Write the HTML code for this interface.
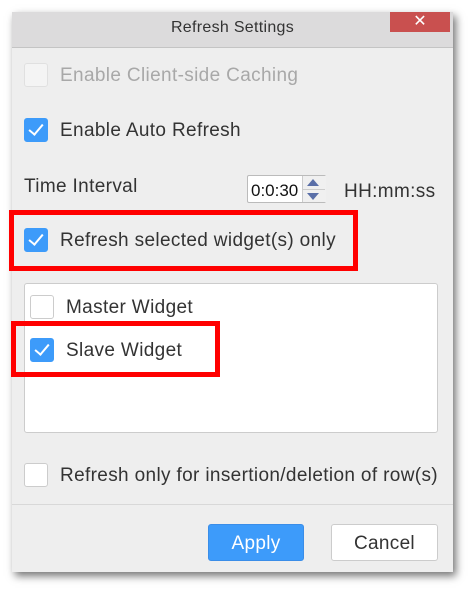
<!DOCTYPE html><html><head><style>
body{margin:0;width:473px;height:592px;background:#fff;font-family:"Liberation Sans",sans-serif;position:relative;overflow:hidden}
.a{position:absolute}
.dlg{left:12px;top:12px;width:441px;height:560px;background:#eeeeee;box-shadow:3px 4px 8px rgba(0,0,0,.55)}
.cb{position:absolute;width:22px;height:22px;border:1px solid #ccc;border-radius:3px;background:#fff;box-sizing:content-box}
.cb.on{background:#3d9bfa;border-color:#3d9bfa}
.cb.on::after{content:"";position:absolute;left:7px;top:2px;width:6px;height:12px;border:solid #fff;border-width:0 2.5px 2.5px 0;transform:rotate(40deg)}
.t{position:absolute;font-size:19px;letter-spacing:0.35px;color:#333;line-height:24px;white-space:nowrap;margin-top:1px}
.red{position:absolute;border:5px solid #f00;box-sizing:border-box}
</style></head><body>
<div class="a dlg"></div>
<div class="a" style="left:12px;top:12px;width:441px;height:35px;background:#dcdbdc;border-bottom:1px solid #c4c4c4"></div>
<div class="t" style="left:12px;width:441px;text-align:center;top:15px;font-size:16px;letter-spacing:0.3px;color:#333">Refresh Settings</div>
<div class="a" style="left:390px;top:12px;width:60px;height:20px;background:#c9504f;color:#fff;text-align:center;font-size:16px;line-height:20px">✕</div>

<div class="cb" style="left:24px;top:63px;background:#f4f4f4;border-color:#e0e0e0"></div>
<div class="t" style="left:60px;top:63px;color:#a8a8a8">Enable Client-side Caching</div>
<div class="cb on" style="left:24px;top:118px"></div>
<div class="t" style="left:60px;top:118px">Enable Auto Refresh</div>

<div class="t" style="left:24px;top:174px">Time Interval</div>
<div class="a" style="left:247px;top:175px;width:79px;height:28px;border:1px solid #bbb;background:#fff;box-sizing:border-box;border-radius:2px"></div>
<div class="t" style="left:251px;top:178px;font-size:17px;letter-spacing:0;color:#111">0:0:30</div>
<div class="a" style="left:302px;top:176px;width:23px;height:26px;background:#f0f0f0;border-left:1px solid #ccc"></div>
<div class="a" style="left:307px;top:179px;border:6px solid transparent;border-bottom:7px solid #5a6fa8;border-top:0"></div>
<div class="a" style="left:307px;top:193px;border:6px solid transparent;border-top:7px solid #5a6fa8;border-bottom:0"></div>
<div class="a" style="left:302px;top:189px;width:23px;height:1px;background:#ccc"></div>
<div class="t" style="left:344px;top:179px">HH:mm:ss</div>

<div class="red" style="left:9px;top:210px;width:349px;height:61px"></div>
<div class="cb on" style="left:24px;top:228px"></div>
<div class="t" style="left:60px;top:228px">Refresh selected widget(s) only</div>

<div class="a" style="left:24px;top:283px;width:414px;height:150px;background:#fff;border:1px solid #ccc;box-sizing:border-box;border-radius:3px"></div>
<div class="cb" style="left:30px;top:295px"></div>
<div class="t" style="left:66px;top:295px">Master Widget</div>
<div class="red" style="left:11px;top:321px;width:209px;height:56px"></div>
<div class="cb on" style="left:30px;top:338px"></div>
<div class="t" style="left:66px;top:338px">Slave Widget</div>

<div class="cb" style="left:24px;top:463px"></div>
<div class="t" style="left:60px;top:463px">Refresh only for insertion/deletion of row(s)</div>
<div class="a" style="left:12px;top:504px;width:441px;height:1px;background:#d8d8d8"></div>

<div class="a" style="left:208px;top:524px;width:96px;height:37px;background:#3d9bfa;border:1px solid #3a8de8;box-sizing:border-box;border-radius:3px;color:#fff;font-size:19px;letter-spacing:0.3px;line-height:37px;text-align:center">Apply</div>
<div class="a" style="left:331px;top:524px;width:107px;height:37px;background:#fff;border:1px solid #ccc;box-sizing:border-box;border-radius:3px;color:#333;font-size:19px;letter-spacing:0.3px;line-height:37px;text-align:center">Cancel</div>
</body></html>
